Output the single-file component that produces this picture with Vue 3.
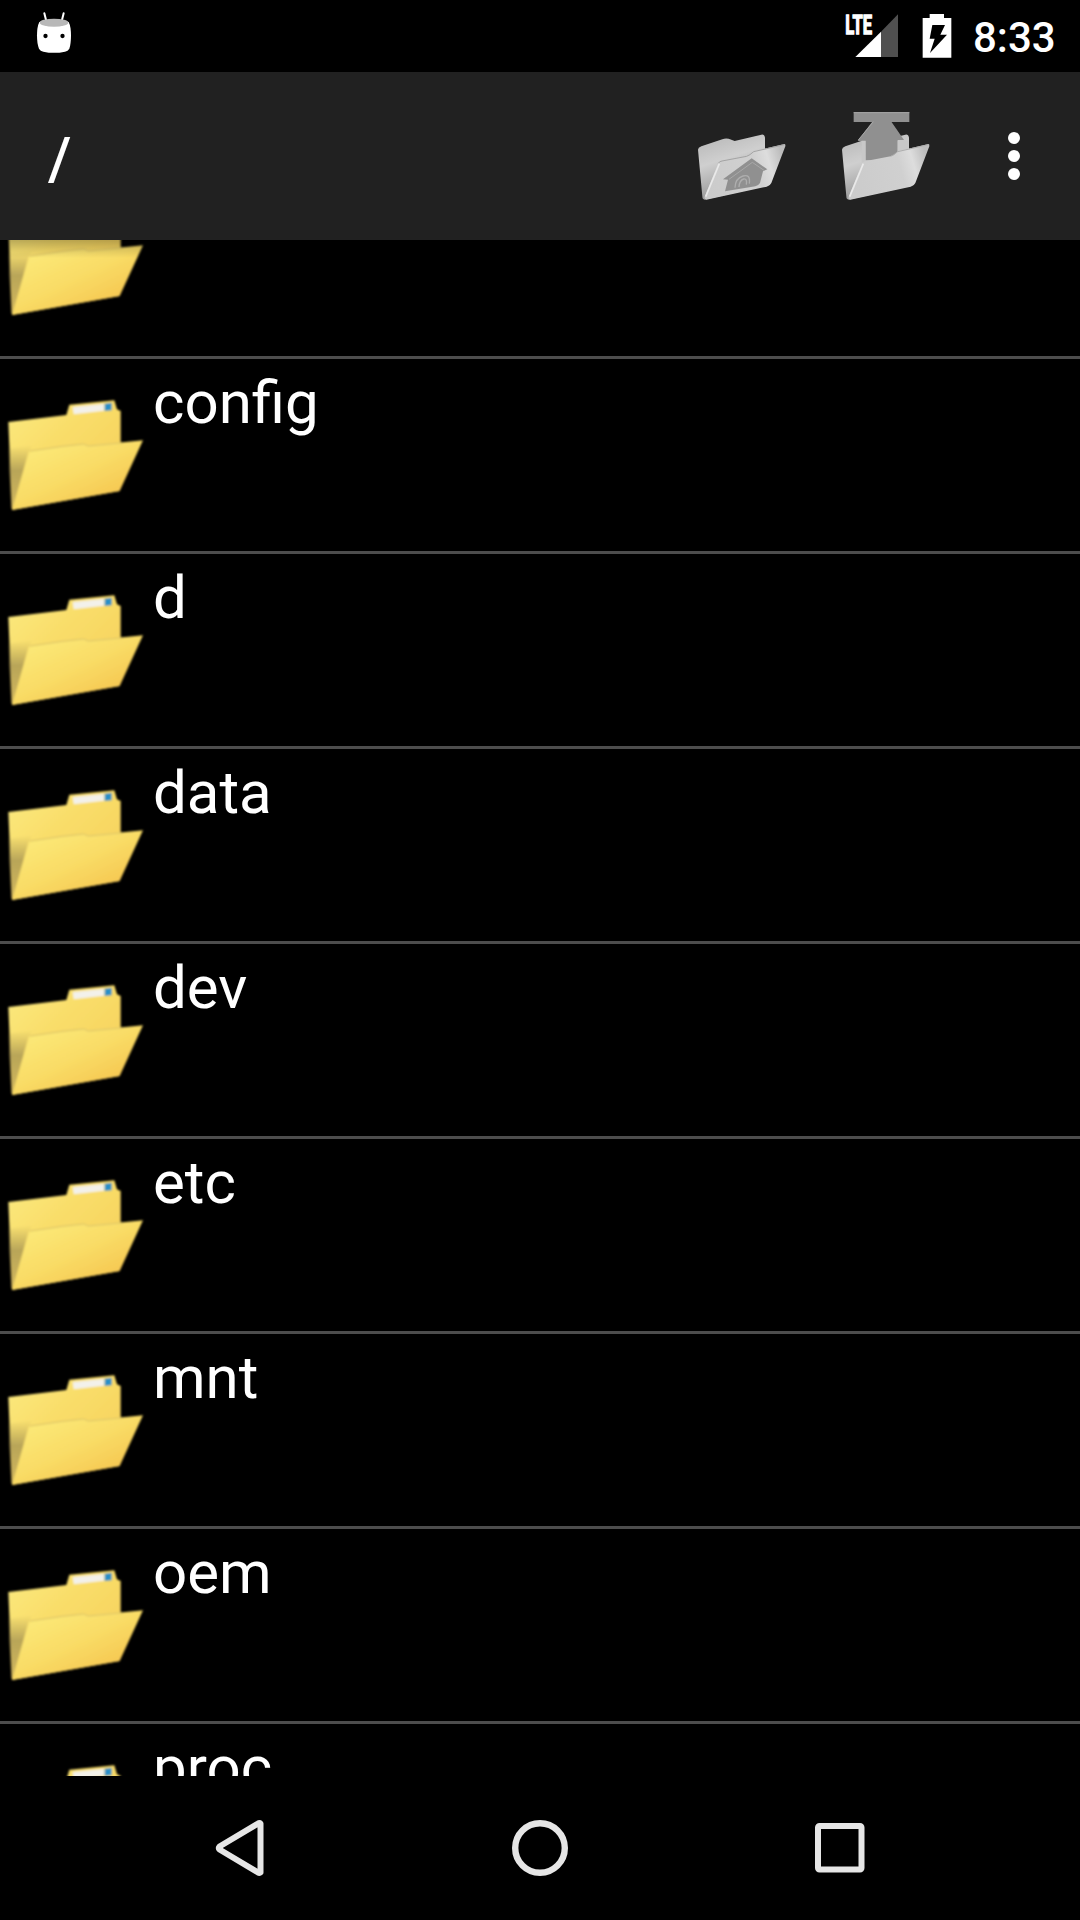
<script setup>
const folders = ['', 'config', 'd', 'data', 'dev', 'etc', 'mnt', 'oem', 'proc']
</script>

<template>
  <div class="screen">
    <svg class="defs" width="0" height="0" aria-hidden="true">
      <defs>
        <linearGradient id="back" x1="0" y1="0" x2="1" y2="1">
          <stop offset="0" stop-color="#fbea80" />
          <stop offset="0.4" stop-color="#f9dd69" />
          <stop offset="1" stop-color="#f6cd58" />
        </linearGradient>
        <linearGradient id="front" x1="0" y1="0" x2="0.9" y2="1">
          <stop offset="0" stop-color="#fced7e" />
          <stop offset="0.5" stop-color="#f9dc66" />
          <stop offset="1" stop-color="#f5bd47" />
        </linearGradient>
        <linearGradient id="side" x1="0" y1="0" x2="0" y2="1">
          <stop offset="0" stop-color="#a39253" stop-opacity="0" />
          <stop offset="0.4" stop-color="#a39253" stop-opacity="0.75" />
          <stop offset="1" stop-color="#c2a958" stop-opacity="0.7" />
        </linearGradient>
        <linearGradient id="greyBack" x1="0" y1="0" x2="0.35" y2="1">
          <stop offset="0" stop-color="#b5b5b5" />
          <stop offset="0.45" stop-color="#cfcfcf" />
          <stop offset="1" stop-color="#929292" />
        </linearGradient>
        <linearGradient id="greyFront" x1="0" y1="0.6" x2="1" y2="0.4">
          <stop offset="0" stop-color="#cbcbcb" />
          <stop offset="0.65" stop-color="#d0d0d0" />
          <stop offset="0.82" stop-color="#dddddd" />
          <stop offset="1" stop-color="#bcbcbc" />
        </linearGradient>
        <filter id="soft" x="-10%" y="-10%" width="120%" height="120%">
          <feGaussianBlur stdDeviation="3.6" />
        </filter>
        <filter id="softGrey" x="-10%" y="-10%" width="120%" height="120%">
          <feGaussianBlur stdDeviation="2" />
        </filter>
      </defs>
    </svg>

    <header class="status">
      <svg class="droid" width="36" height="72" viewBox="0 0 108 216">
        <path d="M25 40l6 24M83 40l-6 24" stroke="#fff" stroke-width="6" stroke-linecap="round" />
        <path d="M10 66Q54 54 98 66Q105 80 105 106Q105 132 100 146Q96 153 87 155Q54 162 22 155Q13 153 9 146Q3 132 3 106Q3 80 10 66Z" fill="#fff" />
        <ellipse cx="54" cy="68" rx="43" ry="12" fill="#b8b8b8" />
        <circle cx="28.500" cy="108" r="6.500" />
        <circle cx="79.500" cy="108" r="6.500" />
      </svg>
      <div class="status-right">
        <svg width="56" height="72" viewBox="0 0 168 216">
          <path d="M159 43V171H108V95Z" fill="#505050" />
          <path d="M108 95V171H31Z" fill="#fff" />
          <text class="lte" x="1" y="101" textLength="80" lengthAdjust="spacingAndGlyphs">LTE</text>
        </svg>
        <svg class="battery" width="30" height="72" viewBox="0 0 90 216">
          <path d="M2 54H23V42H66V54H88V173H2Z" fill="#fff" />
          <path d="M31 75H69L55 104H75L24 159L38 116H23Z" fill="#000" />
        </svg>
        <span class="clock">8:33</span>
      </div>
    </header>

    <div class="appbar">
      <h1>/</h1>
      <div class="actions">
        <svg width="90" height="130" viewBox="-1 -1 270 390">
          <g filter="url(#softGrey)">
            <path d="M5 178Q5 172 15 168L78 147Q90 142 105 148L115 152L195 133Q204 131 206 142L206 180L216 285L25 328Q18 328 18 318Z" fill="url(#greyBack)" />
            <path d="M66 219Q69 213 77 212L151 198Q160 195 172 184Q178 180 188 179L264 161Q268 161 267 168L225 278Q221 287 211 289L30 328Q23 328 25 319Z" fill="url(#greyFront)" />
            <path d="M66 219Q69 213 77 212L151 198Q160 195 172 184L264 163" fill="none" stroke="#a4a4a4" stroke-width="3" />
            <path d="M28 319L69 220" stroke="#e9e9e9" stroke-width="5" />
            <path d="M80 267L166 204L213 237L200 243L191 278Q187 285 177 288L86 303L95 268Z" fill="#909090" />
            <path d="M116 292Q117 264 140 257Q163 250 159 280M128 290Q129 270 142 266Q153 264 150 283" fill="none" stroke="#aeaeae" stroke-width="4" />
            <path d="M98 267L168 216L203 240" fill="none" stroke="#a8a8a8" stroke-width="3" />
          </g>
        </svg>
        <svg class="up" width="90" height="130" viewBox="-1 -1 270 390">
          <g filter="url(#softGrey)">
            <path d="M5 178Q5 172 15 168L78 147L115 152L195 133Q204 131 206 142L206 180L216 285L25 328Q18 328 18 318Z" fill="url(#greyBack)" />
            <path d="M40 66H207V95H40ZM98 91H151L191 149H172V210H75V152H52Z" fill="#909090" />
            <path d="M64 151H76V214L64 217ZM172 151H205V183L172 190Z" fill="#c8c8c8" />
            <path d="M40 67H207M99 94L54 149" stroke="#a8a8a8" stroke-width="3" />
            <path d="M66 219Q69 213 77 212L151 198Q160 195 172 184Q178 180 188 179L264 161Q268 161 267 168L225 278Q221 287 211 289L30 328Q23 328 25 319Z" fill="url(#greyFront)" />
            <path d="M151 198Q160 195 172 184L264 163" fill="none" stroke="#adadad" stroke-width="3" />
            <path d="M28 319L69 220" stroke="#e9e9e9" stroke-width="5" />
          </g>
        </svg>
        <svg class="more" width="12" height="48" viewBox="0 0 12 48" fill="#fff">
          <circle cx="6" cy="6" r="6" />
          <circle cx="6" cy="24" r="6" />
          <circle cx="6" cy="42" r="6" />
        </svg>
      </div>
    </div>

    <main class="list">
      <div v-for="(name, i) in folders" :key="i" class="row">
        <svg width="150" height="192" viewBox="-1 -64 450 576">
          <g filter="url(#soft)">
            <path d="M24 125L198 104L207 73L342 60L350 87L361 92V190L358 332L35 389Z" fill="url(#back)" />
            <path d="M24 205L98 195L84 215L38 384L33 384Z" fill="url(#side)" />
            <path d="M217 80L312 70V91L220 102Z" fill="#f3f1ea" />
            <path d="M313 70L334 67V90L313 92Z" fill="#288fc8" />
            <path d="M88 214L185 199L250 191L264 196L428 180L358 332L35 389Z" fill="url(#front)" />
            <path d="M88 212L185 198L250 191L264 197L370 187" fill="none" stroke="#d3bd66" stroke-width="2.500" />
          </g>
        </svg>
        <span class="name">{{ name }}</span>
      </div>
    </main>

    <nav class="nav">
      <svg width="56" height="60" viewBox="2 0 56 60" fill="none" stroke="#e6e6e6" stroke-width="6" stroke-linejoin="round">
        <path d="M50.500 5.500V54.500Q49.500 55.500 48 54.500L9.500 31.500Q8 30 9.500 28.500L48 5.500Q49.500 4.500 50.500 5.500Z" />
      </svg>
      <svg width="56" height="60" viewBox="0 0 56 60" fill="none" stroke="#e6e6e6" stroke-width="6.400">
        <circle cx="28" cy="30" r="24.800" />
      </svg>
      <svg width="56" height="60" viewBox="0 0 56 60" fill="none" stroke="#e6e6e6" stroke-width="6">
        <rect x="6" y="8" width="43.500" height="43.500" rx="1.500" />
      </svg>
    </nav>
  </div>
</template>

<style>
body {
  background: #000;
}
</style>

<style scoped>
.screen {
  display: flex;
  flex-direction: column;
  width: 1080px;
  height: 1920px;
  overflow: hidden;
  background: #000;
  color: #fff;
  font-family: Roboto, sans-serif;
}
.defs {
  position: absolute;
}
svg {
  display: block;
  flex: none;
}
.status {
  display: flex;
  justify-content: space-between;
  height: 72px;
  flex: none;
}
.droid {
  margin-left: 36px;
}
.status-right {
  display: flex;
  width: 235px;
}
.lte {
  font-size: 78px;
  font-weight: 700;
  fill: #fff;
  stroke: #fff;
  stroke-width: 4px;
}
.battery {
  margin-left: 21px;
}
.clock {
  margin-left: 21px;
  font-size: 42px;
  font-weight: 500;
  line-height: 76px;
}
.appbar {
  display: flex;
  justify-content: space-between;
  height: 168px;
  flex: none;
  background: #212121;
}
h1 {
  margin: 0 0 0 48px;
  font-size: 60px;
  font-weight: 500;
  line-height: 174px;
}
.actions {
  display: flex;
  align-items: flex-start;
  padding: 18px 60px 0 0;
}
.up {
  margin-left: 54px;
}
.more {
  margin: 42px 0 0 78px;
}
.list {
  position: relative;
  display: flex;
  flex-direction: column;
  height: 1536px;
  flex: none;
  overflow: hidden;
}
.list::after {
  content: '';
  position: absolute;
  inset: 0 0 auto;
  height: 18px;
  background: linear-gradient(rgba(0, 0, 0, 0.26), rgba(0, 0, 0, 0.12) 50%, transparent);
}
.row {
  display: flex;
  flex: none;
  height: 192px;
  border-bottom: 3px solid #4d4d4d;
}
.row:first-child {
  margin-top: -76px;
}
.name {
  margin: 9px 0 0 3px;
  font-size: 60px;
  line-height: 70px;
}
.nav {
  display: flex;
  align-items: center;
  justify-content: center;
  gap: 244px;
  height: 144px;
}
</style>
